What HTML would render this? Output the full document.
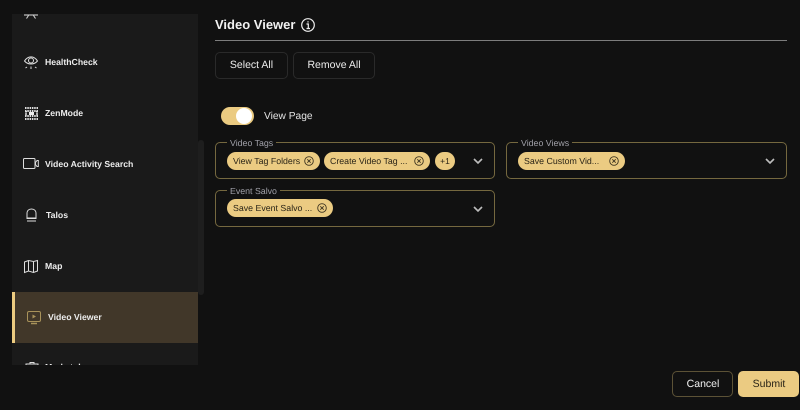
<!DOCTYPE html>
<html><head><meta charset="utf-8">
<style>
html,body{margin:0;padding:0;width:800px;height:410px;overflow:hidden;background:#111;font-family:"Liberation Sans",sans-serif}
body{filter:blur(.35px);text-rendering:geometricPrecision}
.a{position:absolute}
.side{left:12px;top:14px;width:186px;height:351px;background:#1a1a1a;overflow:hidden}
.nav{position:absolute;font-size:8.700px;font-weight:700;color:#ececec;white-space:nowrap;line-height:12px}
svg{position:absolute;overflow:visible;fill:none}
.btn{position:absolute;box-sizing:border-box;border-radius:5px;text-align:center;font-size:10.500px}
.fs{position:absolute;box-sizing:border-box;border:1px solid #75683f;border-radius:5px}
.lg{position:absolute;top:-6.500px;background:#111;color:#a0a0a8;font-size:8.800px;line-height:12px;padding:0 3px;white-space:nowrap}
.chip{position:absolute;height:18px;border-radius:9px;background:#ebcb82;color:#2a2417;font-size:8.800px;line-height:18px;white-space:nowrap;padding-left:6px;box-sizing:border-box}
.chip svg{top:4px}
</style></head><body>
<div class="a side">
<svg style="left:12px;top:0" width="16" height="6" stroke="#ddd" stroke-width="1"><path d="M0 1H14M2.500 4.500L4.500 1.500M11.500 4.500L9.500 1.500"/></svg>
<svg style="left:12px;top:41px" width="16" height="16" stroke="#ddd" stroke-width="1"><path d="M0.500 6C4 0.500 10 0.500 13.500 6C10 10 4 10 0.500 6Z"/><circle cx="7" cy="5.500" r="2.500"/><path d="M1.500 13L3 12M7 11.500V14M12.500 13L11 12"/></svg>
<div class="nav" style="left:33px;top:42px">HealthCheck</div>
<svg style="left:13px;top:93px" width="13" height="13" stroke="#ddd" stroke-width="2" stroke-dasharray="1.500 .8"><path d="M0 1H13M0 4H13M0 9H13M0 12H13"/><path d="M1 4V9M12 4V9" /><rect x="4" y="5" width="5" height="3" fill="#eee" stroke="none"/></svg>
<div class="nav" style="left:33px;top:93px">ZenMode</div>
<svg style="left:11px;top:144px" width="16" height="11" stroke="#ddd" stroke-width="1"><rect x="0.500" y="0.500" width="11.500" height="10" rx="1"/><path d="M14 2.500L12.500 4.500V6.500L14 8.500H15.300V2.500Z"/></svg>
<div class="nav" style="left:33px;top:144px">Video Activity Search</div>
<svg style="left:14px;top:194px" width="11" height="15" stroke="#ddd" stroke-width="1"><path d="M1 10V5.500C1 2.500 3 1 5.500 1S10 2.500 10 5.500V10ZM0.500 10.500H10.500M1 13H10"/></svg>
<div class="nav" style="left:34px;top:195px">Talos</div>
<svg style="left:12px;top:246px" width="15" height="13" stroke="#ddd" stroke-width="1"><path d="M0.500 2L4.500 0.500L9.500 1.500L13.500 0.500V11L9.500 12.500L4.500 11L0.500 12.500ZM4.500 0.500V11M9.500 1.500V12.500"/></svg>
<div class="nav" style="left:33px;top:246px">Map</div>
<div class="a" style="left:0;top:278px;width:186px;height:51px;background:#413729"></div>
<div class="a" style="left:0;top:278px;width:3px;height:51px;background:#eccb80"></div>
<svg style="left:15px;top:297px" width="14" height="14" stroke="#a8925a" stroke-width="1"><rect x="0.500" y="0.500" width="13" height="10" rx="1.500"/><path d="M4 12.500H10" stroke-width="1.500"/><path d="M5.500 3.500L9 5.500L5.500 7.500Z" fill="#a8925a" stroke="none"/></svg>
<div class="nav" style="left:36px;top:297px">Video Viewer</div>
<svg style="left:13px;top:347px" width="14" height="10" stroke="#ddd" stroke-width="1"><path d="M5 3V1.500H9V3M1 3H13V10H1Z"/></svg>
<div class="nav" style="left:33px;top:347px">Marketplace</div>
</div>
<div class="a" style="left:198px;top:140px;width:6px;height:155px;background:#1e1e1e;border-radius:3px"></div>

<div class="a" style="left:215px;top:15px;font-size:13px;font-weight:700;color:#f2f2f2;line-height:19px;white-space:nowrap">Video Viewer</div>
<svg style="left:301px;top:18px" width="14" height="14" stroke="#eee" stroke-width="1.200"><circle cx="7" cy="7" r="6.300"/><path d="M5.500 6H7.300V10.300M5.500 10.500H9M7 3.300V4.500"/></svg>
<div class="a" style="left:215px;top:40px;width:572px;height:1px;background:#7d7d7d"></div>

<div class="btn" style="left:215px;top:52px;width:73px;height:27px;border:1px solid #2a2a2a;color:#ededed;line-height:25px">Select All</div>
<div class="btn" style="left:293px;top:52px;width:82px;height:27px;border:1px solid #2a2a2a;color:#ededed;line-height:25px">Remove All</div>

<div class="a" style="left:221px;top:107px;width:33px;height:18px;border-radius:9px;background:#ebcb82"></div>
<div class="a" style="left:236px;top:108px;width:16px;height:16px;border-radius:8px;background:#fff"></div>
<div class="a" style="left:264px;top:110px;font-size:10.200px;line-height:14px;color:#e4e4e4;white-space:nowrap">View Page</div>

<div class="fs" style="left:215px;top:142px;width:280px;height:37px">
<div class="lg" style="left:11px">Video Tags</div>
<div class="chip" style="left:11px;top:9px;width:93px">View Tag Folders<svg style="left:77px" width="10" height="10" stroke="#3d3420" stroke-width=".9"><circle cx="5" cy="5" r="4.300"/><path d="M3.300 3.300L6.700 6.700M6.700 3.300L3.300 6.700"/></svg></div>
<div class="chip" style="left:108px;top:9px;width:106px">Create Video Tag ...<svg style="left:90px" width="10" height="10" stroke="#3d3420" stroke-width=".9"><circle cx="5" cy="5" r="4.300"/><path d="M3.300 3.300L6.700 6.700M6.700 3.300L3.300 6.700"/></svg></div>
<div class="chip" style="left:219px;top:9px;width:20px;padding:0;text-align:center;font-size:8.500px">+1</div>
<svg style="left:257px;top:15px" width="10" height="6" stroke="#bdbdbd" stroke-width="1.600"><path d="M1 1L5 5L9 1"/></svg>
</div>

<div class="fs" style="left:506px;top:142px;width:281px;height:37px">
<div class="lg" style="left:11px">Video Views</div>
<div class="chip" style="left:11px;top:9px;width:107px">Save Custom Vid...<svg style="left:91px" width="10" height="10" stroke="#3d3420" stroke-width=".9"><circle cx="5" cy="5" r="4.300"/><path d="M3.300 3.300L6.700 6.700M6.700 3.300L3.300 6.700"/></svg></div>
<svg style="left:258px;top:15px" width="10" height="6" stroke="#bdbdbd" stroke-width="1.600"><path d="M1 1L5 5L9 1"/></svg>
</div>

<div class="fs" style="left:215px;top:190px;width:280px;height:37px">
<div class="lg" style="left:11px">Event Salvo</div>
<div class="chip" style="left:11px;top:8px;width:106px">Save Event Salvo ...<svg style="left:90px" width="10" height="10" stroke="#3d3420" stroke-width=".9"><circle cx="5" cy="5" r="4.300"/><path d="M3.300 3.300L6.700 6.700M6.700 3.300L3.300 6.700"/></svg></div>
<svg style="left:257px;top:15px" width="10" height="6" stroke="#bdbdbd" stroke-width="1.600"><path d="M1 1L5 5L9 1"/></svg>
</div>

<div class="btn" style="left:672px;top:371px;width:61px;height:26px;border:1px solid #5c5236;color:#f0f0f0;line-height:24px;padding-left:1px">Cancel</div>
<div class="btn" style="left:738px;top:371px;width:61px;height:26px;background:#ebcb82;color:#2a2417;line-height:26px;padding-left:1px">Submit</div>
</body></html>
